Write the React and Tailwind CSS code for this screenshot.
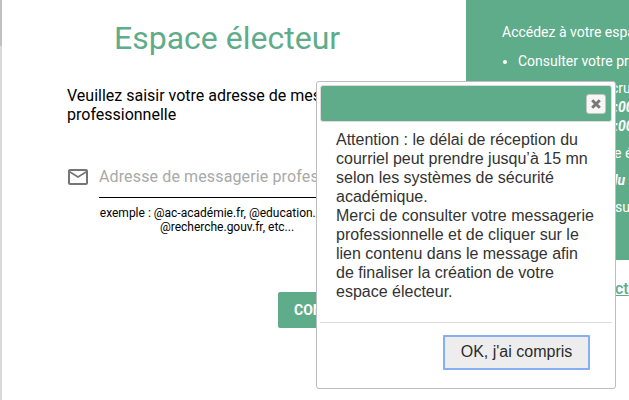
import React from "react";

function MailIcon() {
  return (
    <svg width="24" height="24" viewBox="0 0 24 24" fill="#757575" className="-ml-px mr-px shrink-0">
      <path d="M22 6c0-1.100-.9-2-2-2H4c-1.100 0-2 .9-2 2v12c0 1.100.9 2 2 2h16c1.100 0 2-.9 2-2V6zm-2 0l-8 5-8-5h16zm0 12H4V8l8 5 8-5v10z" />
    </svg>
  );
}

function LoginForm() {
  return (
    <main className="w-[464px] shrink-0 pt-[19px] text-black">
      <h1 className="ml-[112px] whitespace-nowrap text-[32px] leading-[38px] text-[#5fac8a]">
        Espace électeur
      </h1>
      <p className="mt-[29px] ml-[65px] whitespace-nowrap text-[16px] leading-[19px]">
        Veuillez saisir votre adresse de messagerie
        <br />
        professionnelle
      </p>
      <div className="mt-[41px] ml-[65px] flex h-[33px] items-start">
        <MailIcon />
        <div className="ml-2 h-[33px] flex-1 overflow-hidden border-b border-black whitespace-nowrap text-[16px] leading-[24px] tracking-[0.13px] text-[#a9a9a9]">
          Adresse de messagerie profess
        </div>
      </div>
      <p className="mt-[8px] ml-[97px] w-[256px] text-center whitespace-nowrap text-[12px] leading-[14px]">
        exemple : @ac-académie.fr, @education.gouv.fr,
        <br />
        @recherche.gouv.fr, etc...
      </p>
      <button className="mt-[58px] ml-[276px] block h-9 w-[130px] rounded-[2px] bg-[#5fac8a] px-4 text-left text-[14px] font-bold text-white">
        CONNEXION
      </button>
    </main>
  );
}

function InfoPanel() {
  return (
    <aside className="w-[163px] shrink-0 overflow-hidden whitespace-nowrap text-[14px] leading-[19px]">
      <div className="h-[260px] bg-[#5fac8a] pt-[23px] pl-9 text-white">
        <p>Accédez à votre espace</p>
        <ul className="mt-[10px] list-disc pl-4">
          <li>Consulter votre profil</li>
        </ul>
        <p className="mt-2 pl-[109px]">cru</p>
        <p className="pl-[112px] font-bold italic">:00</p>
        <p className="pl-[112px] font-bold italic">:00</p>
        <p className="mt-2 pl-[112px]">e é</p>
        <p className="mt-2 pl-[112px] font-bold italic">lu .</p>
        <p className="mt-2 pl-[113px]">su</p>
      </div>
      <a className="mt-[19px] block pl-[149px] text-[16px] font-medium text-[#5fac8a] underline">ct</a>
    </aside>
  );
}

function NoticeDialog() {
  return (
    <section className="absolute top-[81px] left-[316px] flex h-[308px] w-[300px] flex-col rounded-[3px] border border-[#bebebe] bg-white p-[3px] font-['Liberation_Sans',Arial,sans-serif] text-[16px] leading-[19px] text-[#333]">
      <header className="flex h-[37px] shrink-0 items-center justify-end rounded-[3px] border border-[#dddddd] bg-[#5fac8a] pr-[5px]">
        <button className="flex size-5 items-center justify-center rounded-[3px] border border-[#c5c5c5] bg-[#f6f6f6]">
          <svg width="10" height="10" viewBox="0 0 10 10" fill="none" stroke="#777777" strokeWidth="3">
            <path d="M1.200 1.200l7.600 7.600M8.800 1.200l-7.600 7.600" />
          </svg>
        </button>
      </header>
      <p className="mt-[8px] ml-4 whitespace-nowrap">
        Attention : le délai de réception du<br />
        courriel peut prendre jusqu’à 15 mn<br />
        selon les systèmes de sécurité<br />
        académique.<br />
        Merci de consulter votre messagerie<br />
        professionnelle et de cliquer sur le<br />
        lien contenu dans le message afin<br />
        de finaliser la création de votre<br />
        espace électeur.
      </p>
      <footer className="mt-auto flex h-[63px] justify-end border-t border-[#dddddd] pt-[12px] pr-[22px]">
        <button className="h-[35px] w-[147px] rounded-[1px] border-2 border-[#86aef0] bg-[#ededed] pb-[2px] text-[#2b2b2b]">OK, j'ai compris</button>
      </footer>
    </section>
  );
}

export default function App() {
  return (
    <div className="relative flex h-[400px] w-[629px] overflow-hidden bg-white font-[Roboto,sans-serif]">
      <div className="h-full w-[2px] shrink-0 bg-[#d9d9d9]">
        <div className="h-[46px] bg-[#c1c1c1]" />
      </div>
      <LoginForm />
      <InfoPanel />
      <NoticeDialog />
    </div>
  );
}
